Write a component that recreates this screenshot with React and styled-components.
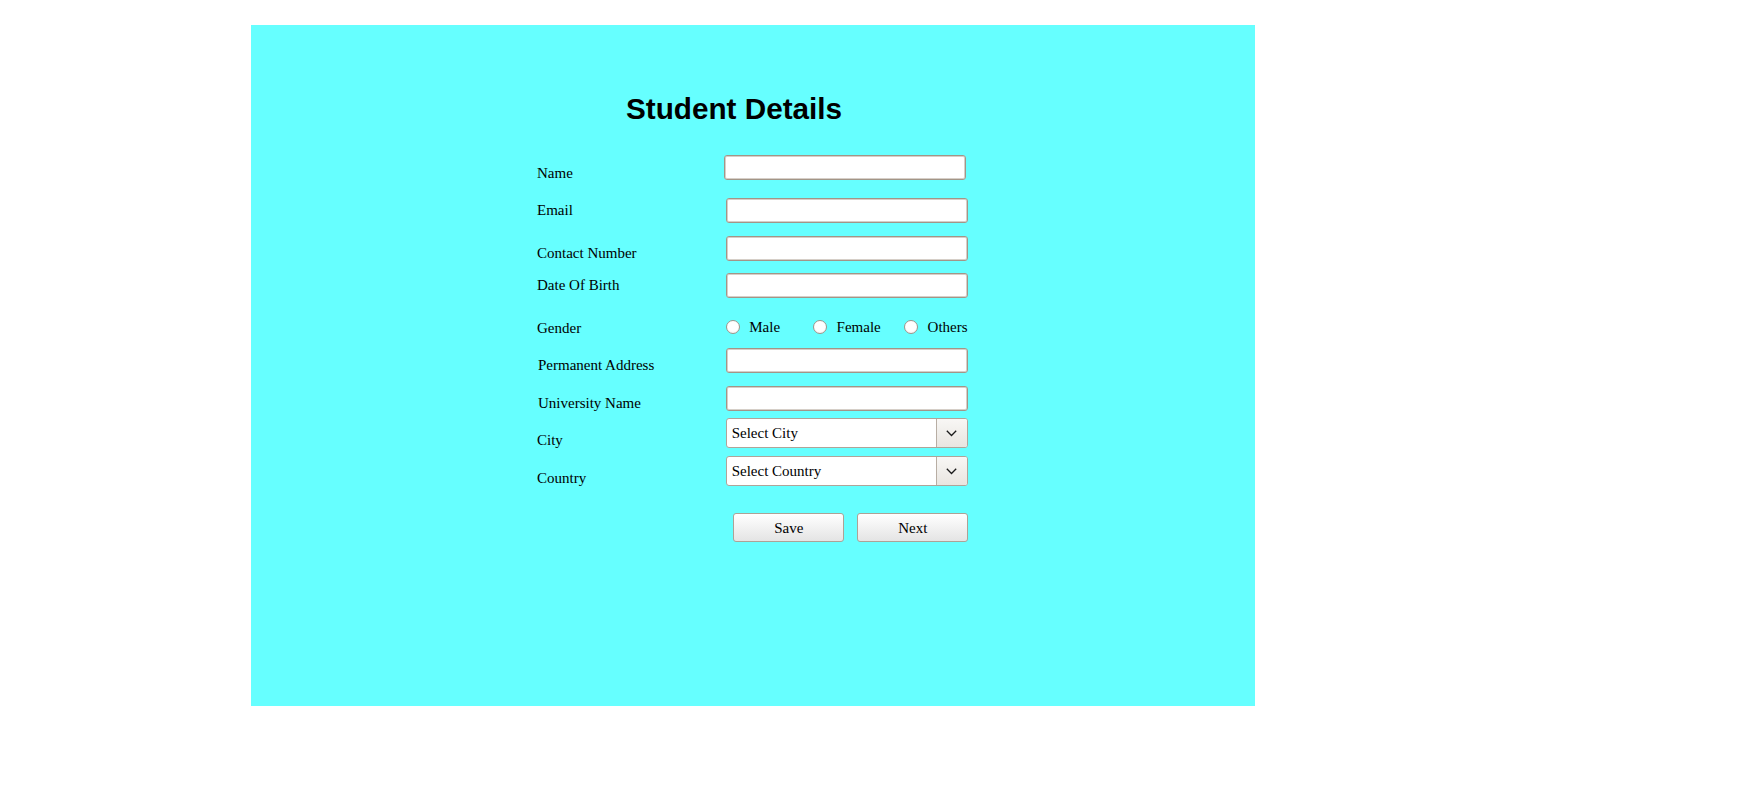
import React from "react";
import styled, { createGlobalStyle } from "styled-components";

const GlobalStyle = createGlobalStyle`
  body {
    margin: 0;
    background: #ffffff;
    font-family: "Liberation Serif", "Times New Roman", serif;
  }
`;

const Page = styled.div`
  padding: 25px 0 0 251px;
`;

const Panel = styled.div`
  width: 1004px;
  height: 681px;
  box-sizing: border-box;
  background-color: #66ffff;
  padding: 67px 0 0 286px;
`;

const Title = styled.h2`
  width: 394px;
  margin: 0;
  text-align: center;
  font-family: "Liberation Sans", Arial, sans-serif;
  font-size: 29.7px;
  font-weight: 700;
  line-height: 34px;
  color: #000000;
`;

const Form = styled.form`
  margin-top: 29px;
  width: 433px;
`;

const Row = styled.div`
  display: flex;
  align-items: ${(props) => (props.$center ? "center" : "flex-start")};
  height: ${(props) => props.$h}px;
  margin-top: ${(props) => props.$gap || 0}px;
`;

const Label = styled.label`
  flex: 0 0 188.7px;
  align-self: flex-start;
  padding-top: ${(props) => props.$offset || 0}px;
  padding-left: ${(props) => props.$indent || 0}px;
  box-sizing: border-box;
  font-size: 15px;
  line-height: 17px;
  color: #000000;
  white-space: nowrap;
`;

const TextInput = styled.input`
  width: 242px;
  height: 25px;
  box-sizing: border-box;
  margin: 0 0 0 ${(props) => props.$shift || 0}px;
  padding: 0 4px;
  border: 1px solid #a39587;
  box-shadow: inset 0 0 0 1px #d6cfc8;
  border-radius: 3px;
  background: #ffffff;
  font-family: "Liberation Serif", "Times New Roman", serif;
  font-size: 15px;
  outline: none;
`;

const RadioGroup = styled.div`
  display: flex;
  align-items: center;
`;

const RadioOption = styled.label`
  display: flex;
  align-items: center;
  width: ${(props) => (props.$w ? `${props.$w}px` : "auto")};
  font-size: 15px;
  line-height: 17px;
  color: #000000;
`;

const RadioCircle = styled.span`
  width: 14px;
  height: 14px;
  box-sizing: border-box;
  border-radius: 50%;
  border: 1px solid #a0958b;
  background: radial-gradient(circle at 50% 40%, #ffffff 55%, #ece9e6 100%);
  margin-right: 9.6px;
`;

const SelectBox = styled.div`
  display: flex;
  width: 242px;
  height: 30px;
  box-sizing: border-box;
  border: 1px solid #b0a499;
  border-radius: 3px;
  background: #ffffff;
  overflow: hidden;
`;

const SelectValue = styled.div`
  flex: 1;
  display: flex;
  align-items: center;
  padding-left: 5px;
  padding-top: 1px;
  font-size: 15px;
  color: #000000;
`;

const SelectArrow = styled.div`
  flex: 0 0 30px;
  display: flex;
  align-items: center;
  justify-content: center;
  border-left: 1px solid #b8aea4;
  background: linear-gradient(#f8f7f5, #e9e5e0);
`;

const ButtonRow = styled.div`
  display: flex;
  gap: 13px;
  margin-top: 27px;
  padding-left: 196.3px;
`;

const Button = styled.button`
  width: 111px;
  height: 29px;
  box-sizing: border-box;
  border: 1px solid #ada296;
  border-radius: 3px;
  background: linear-gradient(#ffffff, #e4e4e4);
  font-family: "Liberation Serif", "Times New Roman", serif;
  font-size: 15px;
  color: #000000;
  padding: 1px 0 0;
`;

const Chevron = () => (
  <svg width="11" height="7" viewBox="0 0 11 7">
    <path d="M0.8 0.8 L5.5 5.5 L10.2 0.8" fill="none" stroke="#1a1a1a" strokeWidth="1.3" />
  </svg>
);

const Select = ({ placeholder }) => (
  <SelectBox>
    <SelectValue>{placeholder}</SelectValue>
    <SelectArrow>
      <Chevron />
    </SelectArrow>
  </SelectBox>
);

export default function App() {
  return (
    <>
      <GlobalStyle />
      <Page>
        <Panel>
          <Title>Student Details</Title>
          <Form onSubmit={(e) => e.preventDefault()}>
            <Row $h={25}>
              <Label $offset={10}>Name</Label>
              <TextInput type="text" $shift={-1.4} />
            </Row>
            <Row $h={25} $gap={18}>
              <Label $offset={4}>Email</Label>
              <TextInput type="text" />
            </Row>
            <Row $h={25} $gap={13}>
              <Label $offset={9}>Contact Number</Label>
              <TextInput type="text" />
            </Row>
            <Row $h={25} $gap={12}>
              <Label $offset={4}>Date Of Birth</Label>
              <TextInput type="text" />
            </Row>
            <Row $h={18} $gap={20} $center>
              <Label $offset={2}>Gender</Label>
              <RadioGroup>
                <RadioOption $w={87.3}>
                  <RadioCircle />
                  Male
                </RadioOption>
                <RadioOption $w={91}>
                  <RadioCircle />
                  Female
                </RadioOption>
                <RadioOption>
                  <RadioCircle />
                  Others
                </RadioOption>
              </RadioGroup>
            </Row>
            <Row $h={25} $gap={12}>
              <Label $offset={9} $indent={1}>Permanent Address</Label>
              <TextInput type="text" />
            </Row>
            <Row $h={25} $gap={13}>
              <Label $offset={9} $indent={1}>University Name</Label>
              <TextInput type="text" />
            </Row>
            <Row $h={30} $gap={7}>
              <Label $offset={14}>City</Label>
              <Select placeholder="Select City" />
            </Row>
            <Row $h={30} $gap={8}>
              <Label $offset={14}>Country</Label>
              <Select placeholder="Select Country" />
            </Row>
            <ButtonRow>
              <Button type="button">Save</Button>
              <Button type="button">Next</Button>
            </ButtonRow>
          </Form>
        </Panel>
      </Page>
    </>
  );
}
